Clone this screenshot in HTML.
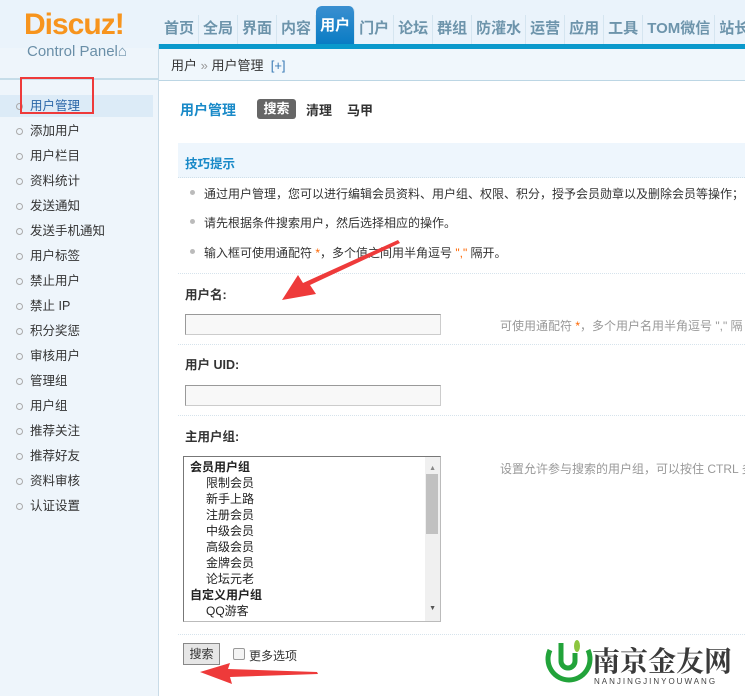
<!DOCTYPE html>
<html><head><meta charset="utf-8"><style>
*{margin:0;padding:0;box-sizing:border-box}
html,body{width:745px;height:696px;overflow:hidden}
body{position:relative;background:#fff;font-family:"Liberation Sans","Noto Sans CJK SC",sans-serif;font-size:12px;color:#333;white-space:nowrap}
.abs{position:absolute}
#hdr{left:0;top:0;width:745px;height:48px;background:#eaf3fb}
#side{left:0;top:48px;width:158px;height:648px;background:#eef5fb}
#logo{left:24px;top:6px;font-size:30px;font-weight:bold;color:#f7941d;letter-spacing:-1px;line-height:38px}
#cp{left:27px;top:43px;font-size:15px;color:#6a8fa8}
#nav{left:160px;top:15px;height:30px;display:flex;font-size:15px;font-weight:bold;color:#6d94ab}
#nav span{flex-shrink:0;white-space:nowrap;padding:0 4px;line-height:28px;border-right:1px solid #d5e5f0}
#nav span.on{background:linear-gradient(#3a8fd0,#0a7cc4);color:#fff;border-radius:6px 6px 0 0;margin-top:-9px;line-height:40px;height:38px;padding-top:0}
#bl{left:159px;top:44px;width:586px;height:5px;background:#0a99cc}
#bc{left:159px;top:49px;width:586px;height:32px;background:#f0f7fc;border-bottom:1px solid #bcd6e4;font-size:13px;line-height:36px;padding-left:12px;color:#333}
#vl{left:158px;top:44px;width:1px;height:652px;background:#c9dbe7}
.sl{left:0;width:153px;height:22px;line-height:22px;padding-left:30px;font-size:12.5px;color:#333}
.sl:before{content:"";position:absolute;left:16px;top:8px;width:5px;height:5px;border:1px solid #aaa;border-radius:50%}
.dot{left:178px;width:567px;border-top:1px dotted #d6e3ec}
.lbl{left:185px;font-weight:bold;font-size:12.5px;color:#333}
.inp{left:185px;width:256px;height:21px;border:1px solid #999;border-right-color:#ccc;border-bottom-color:#ccc;background:#f8f8f8}
.tip{color:#999;font-size:12px}
.bul{left:204px;font-size:12px}
.bul:before{content:"";position:absolute;left:-14px;top:5px;width:5px;height:5px;background:#bbb;border-radius:50%}
</style></head><body>
<div id="hdr" class="abs"></div>
<div id="side" class="abs"></div>
<div class="abs" style="left:0;top:78px;width:158px;height:2px;background:#c6dde9"></div>
<div id="logo" class="abs">Discuz!</div>
<div id="cp" class="abs">Control Panel⌂</div>
<div id="nav" class="abs"><span>首页</span><span>全局</span><span>界面</span><span>内容</span><span class="on">用户</span><span>门户</span><span>论坛</span><span>群组</span><span>防灌水</span><span>运营</span><span>应用</span><span>工具</span><span>TOM微信</span><span>站长</span></div>
<div id="bl" class="abs"></div>
<div id="bc" class="abs" style="line-height:34px">用户 <span style="color:#999">»</span> 用户管理 &nbsp;<span style="color:#3a7bb5">[+]</span></div>
<div id="vl" class="abs"></div>
<div class="abs" style="left:0;top:95px;width:153px;height:22px;background:#dcebf7"></div>
<div class="sl abs" style="top:95px;color:#2a66a8">用户管理</div>
<div class="sl abs" style="top:120px">添加用户</div>
<div class="sl abs" style="top:145px">用户栏目</div>
<div class="sl abs" style="top:170px">资料统计</div>
<div class="sl abs" style="top:195px">发送通知</div>
<div class="sl abs" style="top:220px">发送手机通知</div>
<div class="sl abs" style="top:245px">用户标签</div>
<div class="sl abs" style="top:270px">禁止用户</div>
<div class="sl abs" style="top:295px">禁止 IP</div>
<div class="sl abs" style="top:320px">积分奖惩</div>
<div class="sl abs" style="top:345px">审核用户</div>
<div class="sl abs" style="top:370px">管理组</div>
<div class="sl abs" style="top:395px">用户组</div>
<div class="sl abs" style="top:420px">推荐关注</div>
<div class="sl abs" style="top:445px">推荐好友</div>
<div class="sl abs" style="top:470px">资料审核</div>
<div class="sl abs" style="top:495px">认证设置</div>
<div class="abs" style="left:20px;top:77px;width:74px;height:37px;border:2px solid #ee3a3a"></div>

<div class="abs" style="left:180px;top:100px;font-size:14px;font-weight:bold;color:#1a8ac8">用户管理</div>
<div class="abs" style="left:257px;top:99px;width:39px;height:20px;background:#666;color:#fff;border-radius:3px;font-weight:bold;font-size:13px;text-align:center;line-height:20px">搜索</div>
<div class="abs" style="left:306px;top:100px;font-weight:bold;font-size:13px">清理</div>
<div class="abs" style="left:347px;top:100px;font-weight:bold;font-size:13px">马甲</div>

<div class="abs" style="left:178px;top:143px;width:567px;height:35px;background:#eef6fd;border-bottom:1px dotted #cfe0ea"></div>
<div class="abs" style="left:185px;top:153px;font-weight:bold;color:#1a8ac8;font-size:12.5px">技巧提示</div>
<div class="bul abs" style="top:185px">通过用户管理，您可以进行编辑会员资料、用户组、权限、积分，授予会员勋章以及删除会员等操作；</div>
<div class="bul abs" style="top:214px">请先根据条件搜索用户，然后选择相应的操作。</div>
<div class="bul abs" style="top:244px">输入框可使用通配符 <span style="color:#f60">*</span>，多个值之间用半角逗号 <span style="color:#f60">","</span> 隔开。</div>
<div class="dot abs" style="top:273px"></div>
<div class="lbl abs" style="top:284px">用户名:</div>
<div class="inp abs" style="top:314px"></div>
<div class="tip abs" style="left:500px;top:317px">可使用通配符 <span style="color:#f60">*</span>，多个用户名用半角逗号 "," 隔</div>
<div class="dot abs" style="top:344px"></div>
<div class="lbl abs" style="top:354px">用户 UID:</div>
<div class="inp abs" style="top:385px"></div>
<div class="dot abs" style="top:415px"></div>
<div class="lbl abs" style="top:426px">主用户组:</div>
<div class="abs" style="left:183px;top:456px;width:258px;height:166px;border:1px solid #777;border-right-color:#bbb;border-bottom-color:#bbb;background:#fff;line-height:16px;padding:2px 0 0 6px;font-size:12px;color:#222">
<b>会员用户组</b><br><div style="padding-left:16px">限制会员<br>新手上路<br>注册会员<br>中级会员<br>高级会员<br>金牌会员<br>论坛元老</div><b>自定义用户组</b><br><div style="padding-left:16px">QQ游客</div>
<div class="abs" style="right:0;top:0;width:15px;height:164px;background:#f0f0f0"></div>
<div class="abs" style="right:2px;top:17px;width:12px;height:60px;background:#c1c1c1"></div>
<div class="abs" style="right:4px;top:4px;font-size:7px;color:#888">▲</div>
<div class="abs" style="right:4px;bottom:4px;font-size:7px;color:#555">▼</div>
</div>
<div class="tip abs" style="left:500px;top:460px">设置允许参与搜索的用户组，可以按住 CTRL 多</div>
<div class="dot abs" style="top:634px"></div>
<div class="abs" style="left:183px;top:643px;width:37px;height:22px;background:#e6e6e6;border:1px solid #888;text-align:center;line-height:20px">搜索</div>
<div class="abs" style="left:233px;top:648px;width:12px;height:12px;border:1px solid #999;border-radius:2px;background:#f4f4f4"></div>
<div class="abs" style="left:249px;top:647px">更多选项</div>

<svg class="abs" style="left:0;top:0" width="745" height="696">
<polygon points="400,243 310,285 316,294 282,300 298,275 303,283 398,240" fill="#ee3a3a"/>
<polygon points="317,672 228,669 230,663 200,672 232,684 230,677 318,674" fill="#ee3a3a"/>
<path d="M550,650 a21,21 0 1 0 38,0" fill="none" stroke="#22a33a" stroke-width="5"/>
<path d="M561,643 v18 a7,7 0 0 0 14,0 v-8" fill="none" stroke="#22a33a" stroke-width="5"/>
<ellipse cx="577" cy="646" rx="3" ry="6" fill="#8cc63f"/>
</svg>
<div class="abs" style="left:592px;top:642px;font-size:28px;font-weight:bold;color:#3a3a3a;font-family:'Noto Serif CJK SC',serif;line-height:36px">南京金友网</div>
<div class="abs" style="left:594px;top:677px;font-size:8px;color:#444;letter-spacing:2px">NANJINGJINYOUWANG</div>
</body></html>
